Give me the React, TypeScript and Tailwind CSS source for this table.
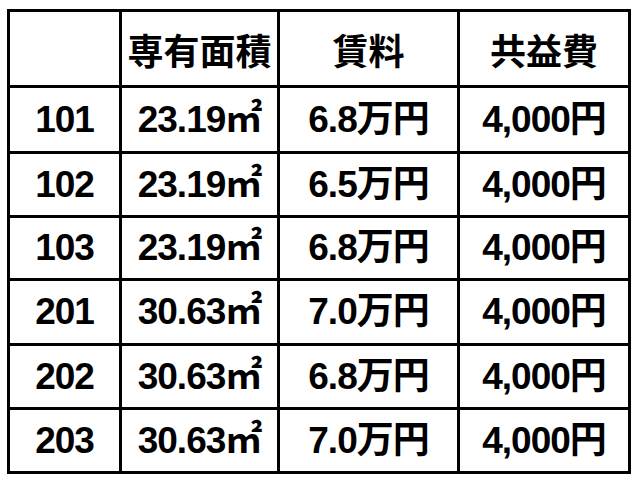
const headers = ["", "専有面積", "賃料", "共益費"];

const rows = [
  { room: "101", area: "23.19㎡", rent: "6.8万円", fee: "4,000円", h: "h-[66px]" },
  { room: "102", area: "23.19㎡", rent: "6.5万円", fee: "4,000円", h: "h-[64px]" },
  { room: "103", area: "23.19㎡", rent: "6.8万円", fee: "4,000円", h: "h-[63px]" },
  { room: "201", area: "30.63㎡", rent: "7.0万円", fee: "4,000円", h: "h-[65px]" },
  { room: "202", area: "30.63㎡", rent: "6.8万円", fee: "4,000円", h: "h-[64px]" },
  { room: "203", area: "30.63㎡", rent: "7.0万円", fee: "4,000円", h: "h-[64px]" },
];

const cell = "border-[3px] border-black text-center align-middle p-0";

export default function App() {
  return (
    <div className="w-[634px] h-[480px] bg-white pl-[7px] pt-[9px] font-['Liberation_Sans','Noto_Sans_CJK_JP',sans-serif] font-bold text-black">
      <table className="table-fixed border-collapse w-[621px]">
        <colgroup>
          <col className="w-[112px]" />
          <col className="w-[158px]" />
          <col className="w-[180px]" />
          <col className="w-[171px]" />
        </colgroup>
        <thead>
          <tr className="h-[76px]">
            {headers.map((t, i) => (
              <th key={i} className={`${cell} text-[36px] font-['Noto_Sans_CJK_JP',sans-serif] font-bold`}>
                {t}
              </th>
            ))}
          </tr>
        </thead>
        <tbody>
          {rows.map((r) => (
            <tr key={r.room} className={r.h}>
              <td className={`${cell} text-[37px] tracking-[-1px]`}>{r.room}</td>
              <td className={`${cell} text-[37px] tracking-[-1px]`}>{r.area}</td>
              <td className={`${cell} text-[37px] tracking-[-1px]`}>{r.rent}</td>
              <td className={`${cell} text-[37px] tracking-[-1px]`}>{r.fee}</td>
            </tr>
          ))}
        </tbody>
      </table>
    </div>
  );
}
